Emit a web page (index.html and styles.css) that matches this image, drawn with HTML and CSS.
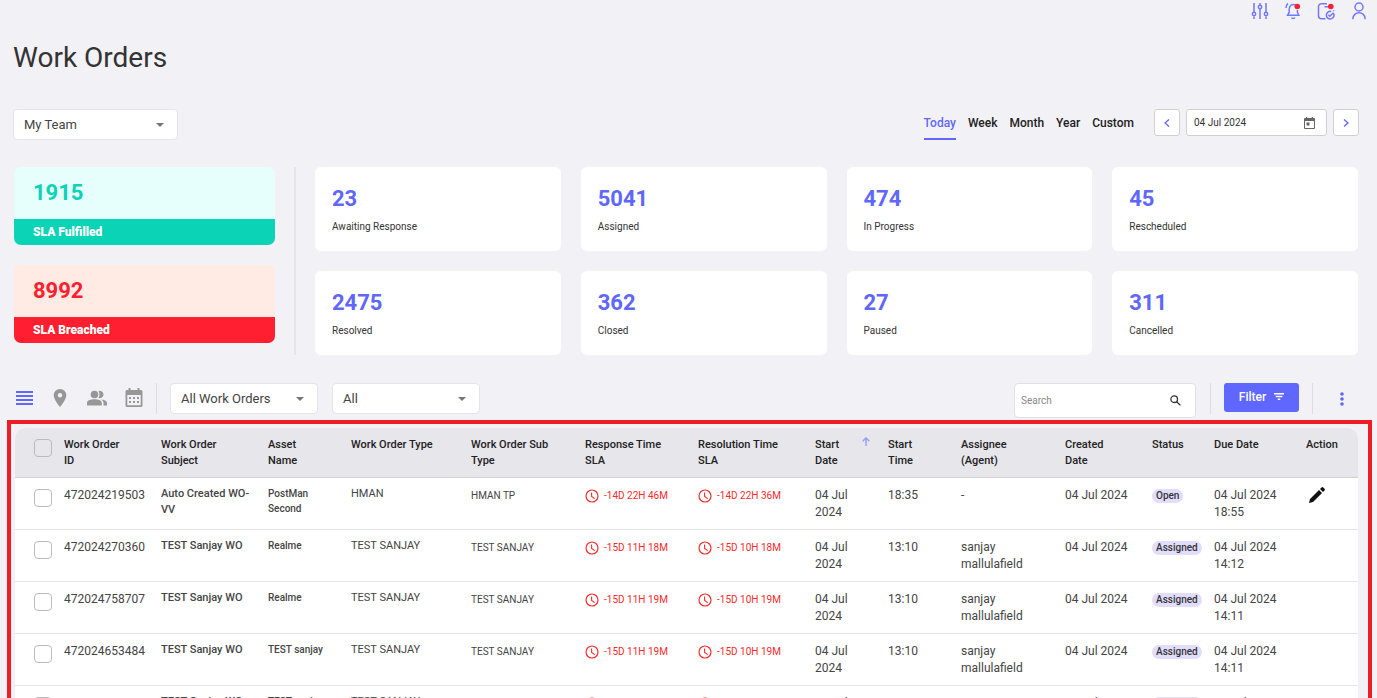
FILE: index.html
```html
<!DOCTYPE html>
<html lang="en">
<head>
    <meta charset="UTF-8">
    <meta name="viewport" content="width=device-width, initial-scale=1.0">
    <title>Work Orders</title>
    <link rel="stylesheet" href="styles.css">
</head>
<body>
    <!-- Shared icons -->
    <svg class="sprite" aria-hidden="true">
        <symbol id="caret" viewBox="0 0 10 5"><path d="M0 0h10L5 5z"/></symbol>
        <symbol id="clock" viewBox="0 0 14 14"><circle cx="7" cy="7" r="6" fill="none" stroke="currentColor" stroke-width="1.2"/><path d="M6.6 3.4v4l3.2 2.2" fill="none" stroke="currentColor" stroke-width="1.1"/></symbol>
    </svg>

    <div class="page">
        <header class="topbar">
            <button class="icon-btn" aria-label="Settings">
                <svg width="18" height="18" viewBox="0 0 18 18" fill="none" stroke="currentColor" stroke-width="1.5">
                    <path d="M3 1v9M3 14.500v2.500M9 1v2M9 7v10M15 1v9M15 14.500v2.500"/>
                    <circle cx="3" cy="12" r="1.700"/><circle cx="9" cy="5" r="1.700"/><circle cx="15" cy="12" r="1.700"/>
                </svg>
            </button>
            <button class="icon-btn" aria-label="Notifications">
                <svg width="18" height="18" viewBox="0 0 18 18" fill="none" stroke="currentColor" stroke-width="1.5">
                    <path d="M12 3C8 1.400 5.500 3.500 5.200 7v3.200L3.600 13.200h11.200L13.400 10.200V8M7.500 15.500c.6 1.300 2.800 1.300 3.400 0M2 6c0-2 .8-3.500 2-4.600"/>
                    <circle class="dot" cx="13.300" cy="4.500" r="2.800"/>
                </svg>
            </button>
            <button class="icon-btn" aria-label="Tasks">
                <svg width="18" height="18" viewBox="0 0 18 18" fill="none" stroke="currentColor" stroke-width="1.5">
                    <path d="M10 1.700H4.500a3 3 0 0 0-3 3v9a3 3 0 0 0 3 3h4M7.500 4.700h3.500M16.600 8.200v1"/>
                    <path d="M16.600 11.500a3.800 3.800 0 1 1-2.400-2M11.300 12.700l1.500 1.500 3.700-3.500"/>
                    <circle class="dot" cx="13.800" cy="4.500" r="2.800"/>
                </svg>
            </button>
            <button class="icon-btn" aria-label="Profile">
                <svg width="18" height="18" viewBox="0 0 18 18" fill="none" stroke="currentColor" stroke-width="1.5">
                    <circle cx="9" cy="5" r="4"/><path d="M3 17.300v-1a6 5.500 0 0 1 12 0v1"/>
                </svg>
            </button>
        </header>

        <h1>Work Orders</h1>

        <div class="controls">
            <div class="select team">
                <select aria-label="Team"><option>My Team</option></select>
                <svg class="caret"><use href="#caret"/></svg>
            </div>
            <nav class="tabs">
                <button class="tab active">Today</button>
                <button class="tab">Week</button>
                <button class="tab">Month</button>
                <button class="tab">Year</button>
                <button class="tab">Custom</button>
            </nav>
            <div class="date-nav">
                <button class="step" aria-label="Previous day"><svg width="6" height="8" viewBox="0 0 6 8"><path d="M5 0.500L1 4l4 3.500"/></svg></button>
                <label class="date">
                    <input type="text" value="04 Jul 2024" aria-label="Date">
                    <svg width="11" height="12" viewBox="0 0 11 12"><path fill-rule="evenodd" d="M1 1h1V0h1.300v1h4.400V0H9v1h1a1 1 0 0 1 1 1v9a1 1 0 0 1-1 1H1a1 1 0 0 1-1-1V2a1 1 0 0 1 1-1zm0 3v7h9V4zM2.500 5.500h3v3h-3z"/></svg>
                </label>
                <button class="step" aria-label="Next day"><svg width="6" height="8" viewBox="0 0 6 8"><path d="M1 0.500L5 4l-4 3.500"/></svg></button>
            </div>
        </div>

        <section class="stats">
            <div class="sla-list">
                <div class="sla fulfilled">
                    <div class="sla-count">1915</div>
                    <div class="sla-name">SLA Fulfilled</div>
                </div>
                <div class="sla breached">
                    <div class="sla-count">8992</div>
                    <div class="sla-name">SLA Breached</div>
                </div>
            </div>
            <div class="cards">
                <div class="card"><div class="count">23</div><div class="name">Awaiting Response</div></div>
                <div class="card"><div class="count">5041</div><div class="name">Assigned</div></div>
                <div class="card"><div class="count">474</div><div class="name">In Progress</div></div>
                <div class="card"><div class="count">45</div><div class="name">Rescheduled</div></div>
                <div class="card"><div class="count">2475</div><div class="name">Resolved</div></div>
                <div class="card"><div class="count">362</div><div class="name">Closed</div></div>
                <div class="card"><div class="count">27</div><div class="name">Paused</div></div>
                <div class="card"><div class="count">311</div><div class="name">Cancelled</div></div>
            </div>
        </section>

        <div class="toolbar">
            <div class="views">
                <button class="view active" aria-label="List view"><svg width="17" height="14" viewBox="0 0 17 14"><path d="M0 0h17v2H0zM0 4h17v2H0zM0 8h17v2H0zM0 12h17v2H0z"/></svg></button>
                <button class="view" aria-label="Map view"><svg width="18" height="18" viewBox="0 0 18 18"><path fill-rule="evenodd" d="M9 0a6.300 6.300 0 0 0-6.300 6.300C2.700 11 9 18 9 18s6.300-7 6.300-11.700A6.300 6.300 0 0 0 9 0zm0 8.500a2.200 2.200 0 1 1 0-4.400 2.200 2.200 0 0 1 0 4.400z"/></svg></button>
                <button class="view" aria-label="Team view"><svg width="20" height="18" viewBox="0 0 20 18"><circle cx="7.500" cy="5.500" r="3.800"/><path d="M0 16.500v-2.500c0-2.800 4-3.800 7.500-3.800s7.300 1 7.300 3.800v2.500zM11.500 1.900a3.800 3.800 0 1 1 0 7.200c1.300-2 1.300-5.200 0-7.200zM14.200 10.400c3 .3 5.800 1.300 5.800 3.600v2.500h-3.500V14c0-1.500-1-2.800-2.300-3.600z"/></svg></button>
                <button class="view" aria-label="Calendar view"><svg width="18" height="19" viewBox="0 0 18 19"><path fill-rule="evenodd" d="M2 2h1.500V0h2v2h7V0h2v2H16a1.500 1.500 0 0 1 1.500 1.500v14A1.500 1.500 0 0 1 16 19H2a1.500 1.500 0 0 1-1.500-1.500v-14A1.500 1.500 0 0 1 2 2zm.3 5v10.200h13.400V7zM4 9h2v2H4zm4 0h2v2H8zm4 0h2v2h-2zM4 13h2v2H4zm4 0h2v2H8zm4 0h2v2h-2z"/></svg></button>
            </div>
            <span class="bar"></span>
            <div class="select">
                <select aria-label="Work order list"><option>All Work Orders</option></select>
                <svg class="caret"><use href="#caret"/></svg>
            </div>
            <div class="select">
                <select aria-label="Type"><option>All</option></select>
                <svg class="caret"><use href="#caret"/></svg>
            </div>
            <label class="search">
                <input type="text" placeholder="Search" aria-label="Search">
                <svg width="11" height="11" viewBox="0 0 11 11"><circle cx="4.200" cy="4.200" r="3.300"/><path d="M6.700 6.700l3.700 3.700"/></svg>
            </label>
            <span class="bar"></span>
            <button class="filter">Filter <svg width="10" height="7" viewBox="0 0 10 7"><path d="M0 0h10v1.500H0zM1.700 2.700h6.600v1.500H1.700zM3.800 5.400h2.400v1.500H3.800z"/></svg></button>
            <span class="bar"></span>
            <button class="more" aria-label="More"><svg width="4" height="14" viewBox="0 0 4 14"><circle cx="2" cy="2" r="1.800"/><circle cx="2" cy="7" r="1.800"/><circle cx="2" cy="12" r="1.800"/></svg></button>
        </div>

        <div class="frame">
            <table>
                <colgroup>
                    <col class="c-check"><col class="c-id"><col class="c-subject"><col class="c-asset"><col class="c-type">
                    <col class="c-sub"><col class="c-resp"><col class="c-reso"><col class="c-start"><col class="c-start">
                    <col class="c-agent"><col class="c-created"><col class="c-status"><col class="c-due"><col class="c-action">
                </colgroup>
                <thead>
                    <tr>
                        <th class="check"><input type="checkbox" aria-label="Select all"></th>
                        <th>Work Order<br>ID</th>
                        <th>Work Order<br>Subject</th>
                        <th>Asset<br>Name</th>
                        <th>Work Order Type</th>
                        <th>Work Order Sub<br>Type</th>
                        <th>Response Time<br>SLA</th>
                        <th>Resolution Time<br>SLA</th>
                        <th><div class="sorted"><span>Start<br>Date</span><svg width="8" height="9" viewBox="0 0 8 9"><path d="M4 9V1M0.700 4.300L4 1l3.300 3.300"/></svg></div></th>
                        <th>Start<br>Time</th>
                        <th>Assignee<br>(Agent)</th>
                        <th>Created<br>Date</th>
                        <th>Status</th>
                        <th>Due Date</th>
                        <th>Action</th>
                    </tr>
                </thead>
                <tbody>
                    <tr>
                        <td class="check"><input type="checkbox" aria-label="Select 472024219503"></td>
                        <td>472024219503</td>
                        <td class="subject">Auto Created WO-<br>VV</td>
                        <td class="asset">PostMan<br>Second</td>
                        <td class="type">HMAN</td>
                        <td class="sub">HMAN TP</td>
                        <td class="sla-time"><svg><use href="#clock"/></svg>-14D 22H 46M</td>
                        <td class="sla-time"><svg><use href="#clock"/></svg>-14D 22H 36M</td>
                        <td>04 Jul<br>2024</td>
                        <td>18:35</td>
                        <td>-</td>
                        <td>04 Jul 2024</td>
                        <td class="status"><span class="badge">Open</span></td>
                        <td>04 Jul 2024<br>18:55</td>
                        <td><button class="edit" aria-label="Edit"><svg width="16" height="16" viewBox="0 0 16 16"><path d="M0 16l1-4L10 3l3 3-9 9zM11 2l1.500-1.500a1.300 1.300 0 0 1 1.800 0l1.200 1.200a1.300 1.300 0 0 1 0 1.800L14 5z"/></svg></button></td>
                    </tr>
                    <tr>
                        <td class="check"><input type="checkbox" aria-label="Select 472024270360"></td>
                        <td>472024270360</td>
                        <td class="subject">TEST Sanjay WO</td>
                        <td class="asset">Realme</td>
                        <td class="type">TEST SANJAY</td>
                        <td class="sub">TEST SANJAY</td>
                        <td class="sla-time"><svg><use href="#clock"/></svg>-15D 11H 18M</td>
                        <td class="sla-time"><svg><use href="#clock"/></svg>-15D 10H 18M</td>
                        <td>04 Jul<br>2024</td>
                        <td>13:10</td>
                        <td>sanjay<br>mallulafield</td>
                        <td>04 Jul 2024</td>
                        <td class="status"><span class="badge">Assigned</span></td>
                        <td>04 Jul 2024<br>14:12</td>
                        <td></td>
                    </tr>
                    <tr>
                        <td class="check"><input type="checkbox" aria-label="Select 472024758707"></td>
                        <td>472024758707</td>
                        <td class="subject">TEST Sanjay WO</td>
                        <td class="asset">Realme</td>
                        <td class="type">TEST SANJAY</td>
                        <td class="sub">TEST SANJAY</td>
                        <td class="sla-time"><svg><use href="#clock"/></svg>-15D 11H 19M</td>
                        <td class="sla-time"><svg><use href="#clock"/></svg>-15D 10H 19M</td>
                        <td>04 Jul<br>2024</td>
                        <td>13:10</td>
                        <td>sanjay<br>mallulafield</td>
                        <td>04 Jul 2024</td>
                        <td class="status"><span class="badge">Assigned</span></td>
                        <td>04 Jul 2024<br>14:11</td>
                        <td></td>
                    </tr>
                    <tr>
                        <td class="check"><input type="checkbox" aria-label="Select 472024653484"></td>
                        <td>472024653484</td>
                        <td class="subject">TEST Sanjay WO</td>
                        <td class="asset">TEST sanjay</td>
                        <td class="type">TEST SANJAY</td>
                        <td class="sub">TEST SANJAY</td>
                        <td class="sla-time"><svg><use href="#clock"/></svg>-15D 11H 19M</td>
                        <td class="sla-time"><svg><use href="#clock"/></svg>-15D 10H 19M</td>
                        <td>04 Jul<br>2024</td>
                        <td>13:10</td>
                        <td>sanjay<br>mallulafield</td>
                        <td>04 Jul 2024</td>
                        <td class="status"><span class="badge">Assigned</span></td>
                        <td>04 Jul 2024<br>14:11</td>
                        <td></td>
                    </tr>
                    <tr>
                        <td class="check"><input type="checkbox" aria-label="Select 472024118486"></td>
                        <td>472024118486</td>
                        <td class="subject">TEST Sanjay WO</td>
                        <td class="asset">TEST sanjay</td>
                        <td class="type">TEST SANJAY</td>
                        <td class="sub">TEST SANJAY</td>
                        <td class="sla-time"><svg><use href="#clock"/></svg>-15D 11H 19M</td>
                        <td class="sla-time"><svg><use href="#clock"/></svg>-15D 10H 19M</td>
                        <td>04 Jul<br>2024</td>
                        <td>13:10</td>
                        <td>sanjay<br>mallulafield</td>
                        <td>04 Jul 2024</td>
                        <td class="status"><span class="badge">Assigned</span></td>
                        <td>04 Jul 2024<br>14:11</td>
                        <td></td>
                    </tr>
                </tbody>
            </table>
        </div>
    </div>
</body>
</html>
```
FILE: styles.css
```css
:root {
    --primary: #6067fe;
    --green: #0bd3b5;
    --red: #ff1f30;
    --bg: #f2f1f6;
    --text: #333;
    --line: #dddde2;
}
* {
    box-sizing: border-box;
}
body {
    margin: 0;
    font-family: Roboto, "Liberation Sans", sans-serif;
    font-size: 12px;
    background-color: var(--bg);
    color: var(--text);
}
button, input, select {
    font-family: inherit;
    color: inherit;
}
button {
    padding: 0;
    border: none;
    background: none;
    cursor: pointer;
}
svg {
    display: block;
    flex: none;
}
.sprite {
    display: none;
}
.page {
    height: 100vh;
    overflow: hidden;
    padding: 2px 18px 0 13px;
}
.topbar {
    display: flex;
    justify-content: flex-end;
    gap: 15px;
    margin-right: -9px;
}
.icon-btn {
    color: #7378fb;
}
.dot {
    fill: var(--red);
    stroke: none;
}
h1 {
    margin: 20px 0 33px;
    font-size: 28px;
    font-weight: 400;
    line-height: 36px;
}

/* Team select, period tabs and date */
.controls {
    display: flex;
    height: 31px;
    margin-bottom: 27px;
}
.select {
    position: relative;
    width: 148px;
    height: 31px;
}
.select.team {
    width: 165px;
    margin-right: auto;
}
.select select {
    appearance: none;
    width: 100%;
    height: 100%;
    padding: 0 30px 0 10px;
    font-size: 13px;
    color: #444;
    background-color: white;
    border: 1px solid #e4e4ea;
    border-radius: 4px;
}
.caret {
    position: absolute;
    top: 14px;
    right: 13px;
    width: 10px;
    height: 4px;
    fill: #777;
    pointer-events: none;
}
.tabs {
    display: flex;
    gap: 12px;
    margin-right: 20px;
}
.tab {
    height: 31px;
    padding-bottom: 2px;
    font-size: 12px;
    font-weight: 500;
    color: #222;
    border-bottom: 2px solid transparent;
}
.tab.active {
    color: var(--primary);
    border-color: var(--primary);
}
.date-nav {
    display: flex;
    gap: 6px;
}
.step, .date {
    display: flex;
    align-items: center;
    justify-content: center;
    height: 27px;
    background-color: white;
    border: 1px solid #d0d0d4;
    border-radius: 3px;
}
.step {
    width: 26px;
}
.step svg {
    fill: none;
    stroke: var(--primary);
    stroke-width: 1.3;
}
.date {
    width: 141px;
    padding: 0 11px 0 7px;
}
.date input {
    flex: 1;
    min-width: 0;
    padding: 0;
    font-size: 10px;
    border: none;
    outline: none;
}
.date svg {
    fill: #666;
}

/* Counters */
.stats {
    display: flex;
    margin-bottom: 28px;
    padding: 0 1px;
}
.sla-list {
    display: flex;
    flex-direction: column;
    gap: 20px;
    width: 20%;
    max-width: 261px;
    margin-right: 19px;
}
.sla {
    overflow: hidden;
    border-radius: 7px;
}
.sla-count {
    padding: 11px 19px;
    font-size: 22px;
    font-weight: 700;
    line-height: 30px;
}
.sla-name {
    padding: 0 19px;
    font-size: 12px;
    font-weight: 900;
    line-height: 26px;
    color: white;
}
.fulfilled .sla-count {
    color: var(--green);
    background-color: #e6fffc;
}
.fulfilled .sla-name {
    background-color: var(--green);
}
.breached .sla-count {
    color: var(--red);
    background-color: #ffeae4;
}
.breached .sla-name {
    background-color: var(--red);
}
.cards {
    flex: 1;
    display: grid;
    grid-template-columns: repeat(4, 1fr);
    gap: 20px;
    padding-left: 19px;
    border-left: 2px solid #e4e4e9;
}
.card {
    padding: 18px 17px 16px;
    background-color: white;
    border-radius: 6px;
}
.count {
    font-size: 22px;
    font-weight: 700;
    line-height: 28px;
    color: var(--primary);
}
.name {
    padding-top: 6px;
    font-size: 10px;
    line-height: 16px;
}

/* Toolbar above the table */
.toolbar {
    display: flex;
    height: 37px;
    padding-right: 1px;
}
.toolbar .select {
    margin-right: 14px;
}
.views {
    display: flex;
    align-items: center;
    gap: 18px;
    height: 29px;
    padding-left: 3px;
    margin-right: 13px;
}
.view svg {
    fill: #979797;
}
.view.active svg {
    fill: var(--primary);
}
.bar {
    width: 1px;
    height: 31px;
    margin-right: 13px;
    background-color: var(--line);
}
.search {
    display: flex;
    align-items: center;
    width: 182px;
    height: 35px;
    padding: 0 14px 0 6px;
    margin-left: auto;
    margin-right: 14px;
    background-color: white;
    border: 1px solid #e0e0e6;
    border-radius: 4px;
}
.search input {
    flex: 1;
    min-width: 0;
    padding: 0;
    font-size: 10px;
    border: none;
    outline: none;
}
.search input::placeholder {
    color: #888;
}
.search svg {
    fill: none;
    stroke: #333;
    stroke-width: 1.3;
}
.filter {
    display: flex;
    align-items: center;
    justify-content: center;
    gap: 8px;
    width: 75px;
    height: 29px;
    padding-bottom: 2px;
    margin-right: 13px;
    font-size: 12px;
    font-weight: 500;
    color: white;
    background-color: var(--primary);
    border-radius: 3px;
}
.filter svg {
    fill: white;
}
.more {
    height: 31px;
    margin: 0 14px;
}
.more svg {
    fill: var(--primary);
}

/* Table */
.frame {
    height: 100%;
    margin: 0 -13px 0 -6px;
    padding: 4px 10px 0 4px;
    border: 4px solid #ee1c25;
}
table {
    table-layout: fixed;
    width: 100%;
    border-collapse: separate;
    border-spacing: 0;
    background-color: white;
    border-radius: 10px;
}
.c-check { width: 49px; }
.c-id { width: 97px; }
.c-subject { width: 107px; }
.c-asset { width: 83px; }
.c-type { width: 120px; }
.c-sub { width: 114px; }
.c-resp { width: 113px; }
.c-reso { width: 117px; }
.c-start { width: 73px; }
.c-agent { width: 104px; }
.c-created { width: 87px; }
.c-status { width: 62px; }
.c-due { width: 92px; }
.c-action { width: 52px; }
th {
    height: 50px;
    padding: 9px 0 0;
    font-size: 11px;
    font-weight: 500;
    line-height: 16px;
    text-align: left;
    vertical-align: top;
    white-space: nowrap;
    color: #222;
    background-color: #e7e6eb;
    border-bottom: 1px solid #cfcfd4;
}
th:first-child {
    border-top-left-radius: 10px;
}
th:last-child {
    border-top-right-radius: 10px;
}
td {
    height: 52px;
    padding: 9px 0 0;
    font-size: 12px;
    line-height: 17px;
    vertical-align: top;
    color: #444;
    border-bottom: 1px solid #e6e6e8;
}
.check {
    padding: 11px 0 0 19px;
}
.check input {
    appearance: none;
    display: block;
    width: 18px;
    height: 18px;
    margin: 0;
    border: 1px solid #bbb;
    border-radius: 4px;
}
.sorted {
    display: flex;
    justify-content: space-between;
    padding-right: 18px;
}
.sorted svg {
    fill: none;
    stroke: #9a9ffc;
    stroke-width: 1.5;
}
.subject, .asset, .type {
    padding-top: 8px;
    line-height: 16px;
}
.subject {
    font-size: 11px;
    font-weight: 500;
}
.asset {
    font-size: 10px;
    font-weight: 500;
    line-height: 15px;
}
.type {
    font-size: 11px;
}
.sub, .sla-time {
    font-size: 10px;
}
.sla-time {
    color: #ff2a2a;
    white-space: nowrap;
}
.sla-time svg {
    display: inline-block;
    width: 14px;
    height: 14px;
    margin-right: 5px;
    vertical-align: middle;
}
.badge {
    display: inline-block;
    padding: 0 4px;
    font-size: 10px;
    font-weight: 500;
    line-height: 14px;
    color: #333;
    background-color: #e2dcfd;
    border-radius: 7px;
}
.edit svg {
    margin-left: 3px;
    fill: #111;
}
```
